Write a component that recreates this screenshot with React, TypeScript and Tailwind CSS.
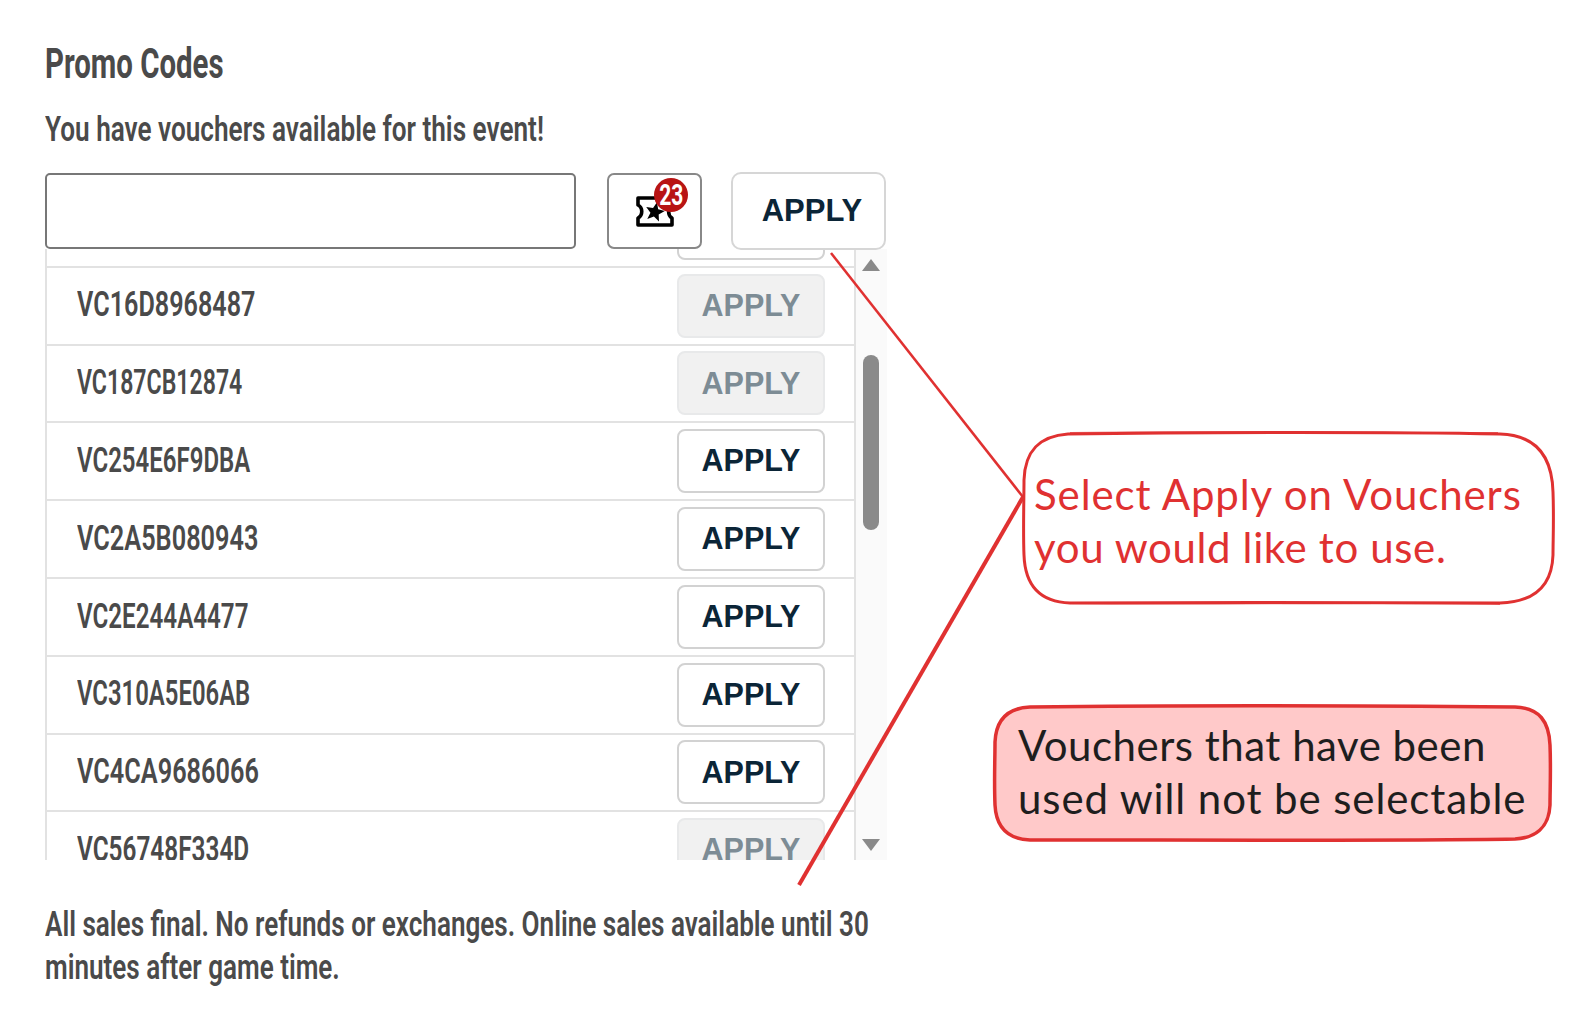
const narrow = "block origin-left whitespace-nowrap font-['Roboto',sans-serif] text-[#4a4a4a]";

const vouchers = [
  { code: "VC16D8968487", used: true, squeeze: 0.719 },
  { code: "VC187CB12874", used: true, squeeze: 0.66 },
  { code: "VC254E6F9DBA", used: false, squeeze: 0.686 },
  { code: "VC2A5B080943", used: false, squeeze: 0.723 },
  { code: "VC2E244A4477", used: false, squeeze: 0.69 },
  { code: "VC310A5E06AB", used: false, squeeze: 0.682 },
  { code: "VC4CA9686066", used: false, squeeze: 0.723 },
  { code: "VC56748F334D", used: true, squeeze: 0.696 },
];

const ApplyButton = ({ used }: { used: boolean }) => (
  <button
    className={
      used
        ? "w-[148px] h-[64px] rounded-[8px] border-2 border-[#e8e9ea] bg-[#f1f1f1] text-[30.5px] font-bold text-[#7d8c95] flex items-center justify-center"
        : "w-[148px] h-[64px] rounded-[8px] border-2 border-[#d2d2d2] bg-white text-[30.5px] font-bold text-[#0b2537] flex items-center justify-center"
    }
  >
    APPLY
  </button>
);

const VoucherRow = ({ code, used, squeeze }: { code: string; used: boolean; squeeze: number }) => (
  <div className="flex-none h-[77.8px] border-t-2 border-[#e2e2e2] flex items-center justify-between pl-[30px] pr-[29px]">
    <span className={`text-[35px] font-semibold ${narrow}`} style={{ transform: `scaleX(${squeeze})` }}>
      {code}
    </span>
    <ApplyButton used={used} />
  </div>
);

const TicketIcon = () => (
  <svg width="40" height="31" viewBox="0 0 40 31">
    <path
      d="M3 2H37V9C32.5 11.5 32.5 19.5 37 22V29H3V22C8 19.5 8 11.5 3 9Z"
      fill="white"
      stroke="black"
      strokeWidth="3.6"
      strokeLinejoin="round"
    />
    <path
      d="M20 6L22.6 12.6L29.5 13L24.2 17.6L26 24.5L20 20.7L14 24.5L15.8 17.6L10.5 13L17.4 12.6Z"
      fill="black"
      transform="rotate(12 20 15.5)"
    />
  </svg>
);

const Annotations = () => (
  <svg width="1577" height="1019" viewBox="0 0 1577 1019" fill="none" className="absolute inset-0 pointer-events-none">
    <path d="M831 253L1023 497" stroke="#e03131" strokeWidth="2.5" />
    <path d="M1023 497L799 885" stroke="#e03131" strokeWidth="4" />
    <path
      d="M1068 434C1200 432 1400 432 1500 434C1535 435 1552 455 1553 492C1554 520 1553 540 1553 555C1552 585 1535 602 1500 603C1400 603 1200 602 1070 603C1040 602 1025 585 1024 555C1023 530 1024 500 1024 480C1025 450 1040 436 1068 434Z"
      stroke="#e03131"
      strokeWidth="3"
    />
    <path
      d="M1070 433C1200 431 1400 433 1498 433M1070 603C1200 605 1400 601 1500 604"
      stroke="#e03131"
      strokeWidth="2"
      opacity="0.7"
    />
    <path
      d="M1030 707C1200 705 1400 706 1515 707C1540 708 1549 722 1550 745C1551 770 1550 790 1550 805C1549 828 1535 838 1515 839C1400 841 1200 840 1030 840C1006 839 996 825 995 805C994 780 995 760 995 742C996 720 1008 708 1030 707Z"
      fill="#ffc9c9"
      stroke="#e03131"
      strokeWidth="3.5"
    />
  </svg>
);

export default function App() {
  return (
    <div className="relative w-[1577px] h-[1019px] bg-white overflow-hidden pl-[45px] pt-[39px] font-['Liberation_Sans',Arial,sans-serif]">
      <div className="w-[842px]">
        <h2 className={`text-[42px] leading-[50px] font-bold [transform:scaleX(0.7)] ${narrow}`}>Promo Codes</h2>
        <p className={`mt-[20px] text-[35px] leading-[42px] font-semibold [transform:scaleX(0.747)] ${narrow}`}>You have vouchers available for this event!</p>

        <div className="mt-[22px] flex items-start h-[76px]">
          <input className="w-[531px] h-[76px] rounded-[5px] border-2 border-[#777] bg-white" />
          <button className="relative ml-[31px] w-[95px] h-[76px] rounded-[7px] border-2 border-[#888] bg-white flex items-center justify-center">
            <TicketIcon />
            <span className="absolute left-[45px] top-[3px] w-[34px] h-[34px] rounded-full bg-[#b81414] flex items-center justify-center">
              <span className="inline-block [transform:scaleX(0.7)] text-white text-[30px] leading-none font-bold font-['Roboto',sans-serif]">23</span>
            </span>
          </button>
          <button className="relative z-10 ml-[29px] -mt-[1px] w-[155px] h-[78px] pl-[7px] rounded-[10px] border-2 border-[#d6d6d6] bg-white text-[#0b2537] text-[31px] font-bold">
            APPLY
          </button>
        </div>

        <div className="flex h-[611px] overflow-hidden">
          <div className="flex-none w-[811px] border-x-2 border-[#e2e2e2] flex flex-col -mt-[61px]">
            <VoucherRow code="VC0F2A71C44E" used={false} squeeze={0.7} />
            {vouchers.map((v) => (
              <VoucherRow key={v.code} code={v.code} used={v.used} squeeze={v.squeeze} />
            ))}
          </div>
          <div className="flex-1 bg-[#fafafa] flex flex-col items-center pt-[10px] pr-[2px]">
            <span className="w-0 h-0 border-x-[9px] border-x-transparent border-b-[12px] border-b-[#8a8a8a]" />
            <div className="mt-[84px] w-[16px] h-[175px] rounded-full bg-[#8a8a8a]" />
            <span className="mt-[309px] w-0 h-0 border-x-[9px] border-x-transparent border-t-[12px] border-t-[#8a8a8a]" />
          </div>
        </div>

        <p className="mt-[43px] text-[35px] leading-[43px] font-semibold">
          <span className={`[transform:scaleX(0.745)] ${narrow}`}>All sales final. No refunds or exchanges. Online sales available until 30</span>
          <span className={`[transform:scaleX(0.745)] ${narrow}`}>minutes after game time.</span>
        </p>
      </div>

      <Annotations />

      <div className="absolute left-[1034px] top-[468px] text-[42px] leading-[53px] whitespace-nowrap text-[#e03131] font-['Lato',sans-serif]">
        <span className="block tracking-[0.9px]">Select Apply on Vouchers</span>
        <span className="block tracking-[0.63px]">you would like to use.</span>
      </div>
      <div className="absolute left-[1018px] top-[719px] text-[42px] leading-[53px] whitespace-nowrap text-[#1e1e1e] font-['Lato',sans-serif]">
        <span className="block tracking-[0.5px]">Vouchers that have been</span>
        <span className="block tracking-[0.9px]">used will not be selectable</span>
      </div>
    </div>
  );
}
